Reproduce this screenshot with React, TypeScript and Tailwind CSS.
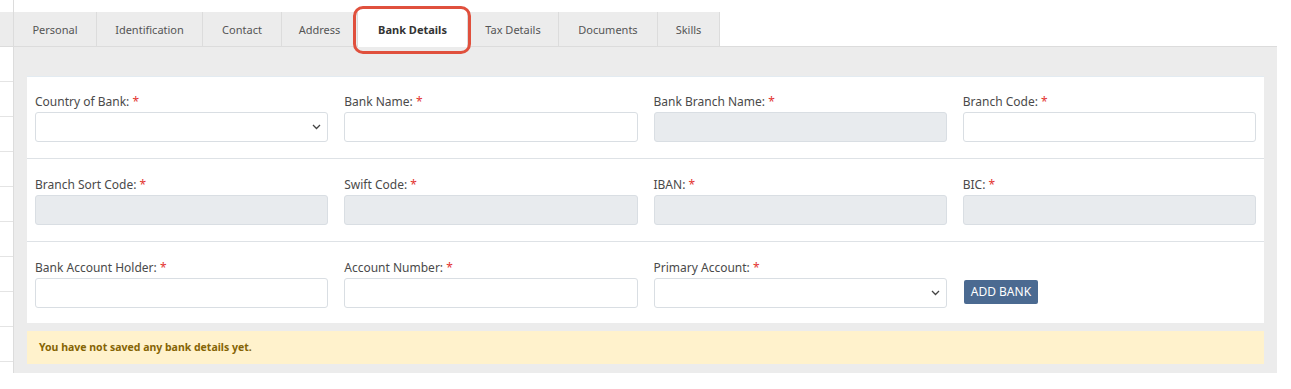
import React from "react";

const tabs = ["Personal", "Identification", "Contact", "Address", "Bank Details", "Tax Details", "Documents", "Skills"];
const tabWidths = [83, 106, 79, 76, 110, 91, 99, 62];

function Chevron() {
  return (
    <svg width="9" height="6" viewBox="0 0 9 6" className="absolute right-[4px] top-1/2 -translate-y-1/2 mr-[2px]">
      <path d="M1 1 L4.5 4.5 L8 1" fill="none" stroke="#444" strokeWidth="1.3" />
    </svg>
  );
}

function Field({ label, kind }: { label: string; kind: "text" | "select" | "disabled" }) {
  return (
    <div className="flex flex-col">
      <div className="text-[12px] leading-[17px] text-[#4a4a4a] mb-[2px] whitespace-nowrap">
        {label} <span className="text-[#e3342f]">*</span>
      </div>
      <div
        className={
          "relative h-[30px] rounded-[3px] border border-[#d9dee3] " +
          (kind === "disabled" ? "bg-[#e8ebee]" : "bg-white")
        }
      >
        {kind === "select" && <Chevron />}
      </div>
    </div>
  );
}

export default function App() {
  return (
    <div
      className="relative w-[1291px] h-[389px] bg-white overflow-hidden"
      style={{ fontFamily: '"Noto Sans", "Open Sans", sans-serif' }}
    >
      <div className="flex">
        {/* left strip */}
        <div className="w-[14px] shrink-0 flex flex-col pt-[12px] border-r border-[#dcdcdc]">
          <div className="h-[35px] bg-[#ececec] border-b border-[#dcdcdc]" />
          {[0, 1, 2, 3, 4, 5, 6, 7, 8].map((i) => (
            <div key={i} className="h-[35px] border-b border-[#e4e4e4]" />
          ))}
        </div>
        {/* main */}
        <div className="flex flex-col pt-[12px] w-[1263px]">
          <div className="flex h-[35px]">
            {tabs.map((t, i) => {
              const active = t === "Bank Details";
              return (
                <div
                  key={t}
                  style={{ width: tabWidths[i] }}
                  className={
                    "flex items-center justify-center pt-[2px] text-[11px] border-r border-[#dcdcdc] " +
                    (active
                      ? "bg-white font-bold text-[#333]"
                      : "bg-[#ececec] text-[#555] border-b")
                  }
                >
                  {t}
                </div>
              );
            })}
            <div className="flex-1 border-b border-[#dcdcdc]" />
          </div>
          <div className="bg-[#ececec] pt-[29px] pl-[13px] pr-[13px] pb-[9px]">
            <div className="bg-white border-t border-[#e3ebf1]">
              <div className="grid grid-cols-4 gap-x-[16px] px-[8px] pt-[16px] pb-[16px] border-b border-[#dee2e6]">
                <Field label="Country of Bank:" kind="select" />
                <Field label="Bank Name:" kind="text" />
                <Field label="Bank Branch Name:" kind="disabled" />
                <Field label="Branch Code:" kind="text" />
              </div>
              <div className="grid grid-cols-4 gap-x-[16px] px-[8px] pt-[17px] pb-[16px] border-b border-[#dee2e6]">
                <Field label="Branch Sort Code:" kind="disabled" />
                <Field label="Swift Code:" kind="disabled" />
                <Field label="IBAN:" kind="disabled" />
                <Field label="BIC:" kind="disabled" />
              </div>
              <div className="grid grid-cols-4 gap-x-[16px] px-[8px] pt-[17px] pb-[15px]">
                <Field label="Bank Account Holder:" kind="text" />
                <Field label="Account Number:" kind="text" />
                <Field label="Primary Account:" kind="select" />
                <div className="flex items-start pt-[21px]">
                  <button className="h-[24px] px-[7px] ml-[1px] bg-[#4b6a91] text-white text-[12px] rounded-[2px]">
                    ADD BANK
                  </button>
                </div>
              </div>
            </div>
            <div className="mt-[8px] h-[33px] bg-[#fff2cc] flex items-center px-[12px] text-[10.5px] font-bold text-[#856404]">
              You have not saved any bank details yet.
            </div>
          </div>
        </div>
      </div>
      {/* annotation highlight */}
      <div className="absolute left-[353px] top-[6px] w-[118px] h-[48px] border-[3px] border-[#e0503d] rounded-[10px]" />
    </div>
  );
}
